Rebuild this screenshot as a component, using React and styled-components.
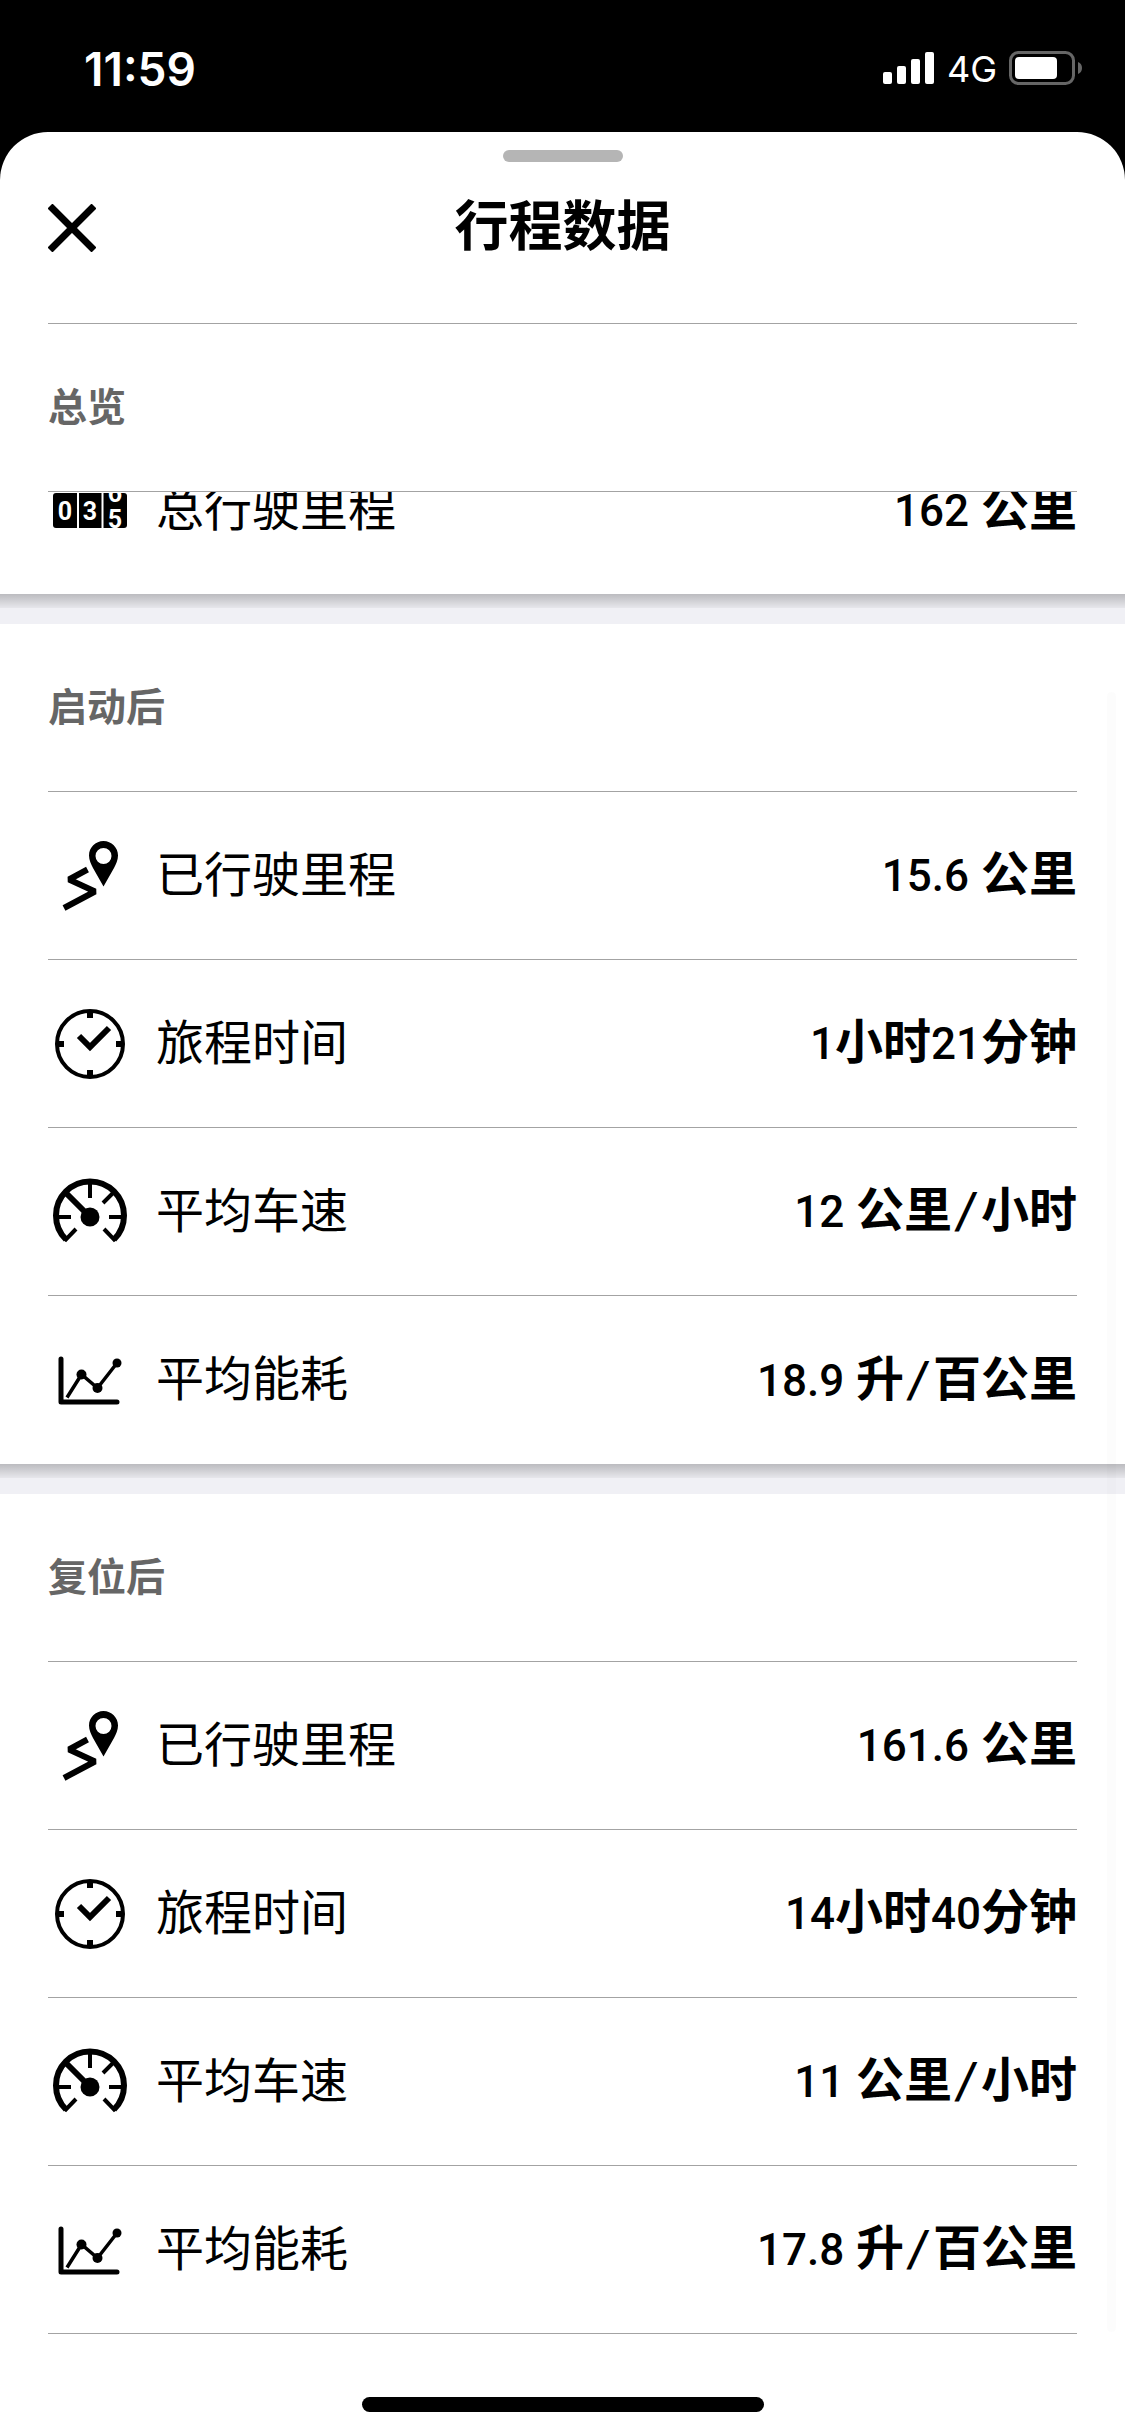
import styled, { createGlobalStyle, css } from "styled-components";

const COLORS = {
  ink: "#000000",
  muted: "#666666",
  line: "#a3a3a3",
  band: "#f0f0f5",
  grabber: "#b5b5b5",
};

const GlobalStyle = createGlobalStyle`
  * {
    box-sizing: border-box;
  }

  body {
    margin: 0;
    background: #000000;
    color: ${COLORS.ink};
    font-family: Roboto, "Noto Sans CJK SC", sans-serif;
  }
`;

const Screen = styled.div`
  display: flex;
  flex-direction: column;
  min-height: 100vh;
`;

const StatusBar = styled.header`
  display: flex;
  align-items: center;
  justify-content: space-between;
  height: 132px;
  padding: 6px 42px 0 84px;
  color: #ffffff;
  font-family: Inter, sans-serif;
`;

const Clock = styled.time`
  font-size: 46px;
  font-weight: 600;
`;

const StatusIcons = styled.div`
  display: flex;
  align-items: center;
  gap: 12px;
`;

const Network = styled.span`
  font-size: 36px;
  font-weight: 400;
`;

const Sheet = styled.main`
  position: relative;
  display: flex;
  flex: 1;
  flex-direction: column;
  background: #ffffff;
  border-radius: 48px 48px 0 0;
`;

const Grabber = styled.div`
  width: 120px;
  height: 12px;
  margin: 18px auto 0;
  border-radius: 6px;
  background: ${COLORS.grabber};
`;

const TitleBar = styled.div`
  display: grid;
  grid-template-columns: 48px 1fr 48px;
  align-items: center;
  height: 162px;
  margin: 0 48px;
  padding-bottom: 30px;
  border-bottom: 1px solid ${COLORS.line};
`;

const CloseButton = styled.button`
  display: flex;
  padding: 0;
  border: 0;
  background: none;
  cursor: pointer;
`;

const Title = styled.h1`
  margin: 0;
  font-size: 54px;
  font-weight: 700;
  line-height: 72px;
  text-align: center;
`;

const Section = styled.section`
  & + & {
    border-top: 30px solid ${COLORS.band};
  }
`;

const SectionTitle = styled.h2`
  display: flex;
  align-items: center;
  height: 168px;
  margin: 0 48px;
  padding-bottom: 8px;
  border-bottom: 1px solid ${COLORS.line};
  color: ${COLORS.muted};
  font-size: 39px;
  font-weight: 700;
`;

const Rows = styled.dl`
  display: flex;
  flex-direction: column;
  justify-content: flex-end;
  margin: 0;
  padding: 0 48px;
  ${({ $scrolled }) =>
    $scrolled &&
    css`
      height: 102px;
      overflow: hidden;
    `}
`;

const Row = styled.div`
  display: flex;
  flex-shrink: 0;
  align-items: center;
  height: 168px;
  font-size: 48px;
  line-height: 72px;

  &:not(:last-child),
  ${Section}:last-of-type &:last-child {
    border-bottom: 1px solid ${COLORS.line};
  }
`;

const IconSlot = styled.span`
  display: flex;
  width: 84px;
  margin-right: 24px;
`;

const Label = styled.dt`
  flex: 1;
`;

const Value = styled.dd`
  margin: 0;
  font-weight: 700;
`;

const Digits = styled.span`
  font-size: 44px;
  font-weight: 500;
`;

const Slash = styled.span`
  font-family: "DejaVu Sans Mono", monospace;
  font-weight: 400;
  line-height: 48px;
`;

const Shadow = styled.div`
  position: relative;
  height: 14px;
  margin-bottom: -14px;
  background: linear-gradient(rgba(0, 0, 0, 0.22), rgba(0, 0, 0, 0.04));
`;

const ScrollBar = styled.div`
  position: absolute;
  top: 560px;
  right: 9px;
  bottom: 104px;
  width: 9px;
  border-radius: 4px;
  background: rgba(0, 0, 0, 0.01);
`;

const HomeIndicator = styled.div`
  width: 402px;
  height: 15px;
  margin: auto auto 24px;
  border-radius: 8px;
  background: ${COLORS.ink};
`;

const SignalIcon = () => (
  <svg width="52" height="36" viewBox="0 0 52 36" fill="currentColor">
    <rect x="0" y="21" width="9" height="12" rx="2" />
    <rect x="14" y="15" width="9" height="18" rx="2" />
    <rect x="28" y="8" width="9" height="25" rx="2" />
    <rect x="42" y="1" width="9" height="32" rx="2" />
  </svg>
);

const BatteryIcon = () => (
  <svg width="74" height="36" viewBox="0 0 74 36" fill="none">
    <rect x="1.500" y="1.500" width="63" height="31" rx="8" stroke="#666" strokeWidth="3" />
    <rect x="6" y="6" width="42" height="22" rx="4" fill="#fff" />
    <path d="M69 11a6.500 6.500 0 0 1 0 12z" fill="#666" />
  </svg>
);

const CloseIcon = () => (
  <svg width="48" height="48" viewBox="0 0 48 48" fill="none">
    <path d="M2 2L46 46M46 2L2 46" stroke="#000" strokeWidth="7" />
  </svg>
);

const OdometerIcon = () => (
  <svg width="84" height="84" viewBox="0 0 84 84">
    <defs>
      <clipPath id="drum">
        <rect x="57" y="25" width="22" height="35" />
      </clipPath>
    </defs>
    <rect x="5" y="25" width="74" height="35" rx="3" />
    <path d="M30 25V60M54.500 25V60" stroke="#fff" strokeWidth="2" />
    <g
      fill="#fff"
      fontFamily="Roboto, sans-serif"
      fontWeight="700"
      fontSize="25"
      textAnchor="middle"
    >
      <text x="17" y="52">0</text>
      <text x="42" y="52">3</text>
      <g clipPath="url(#drum)">
        <text x="67" y="34">6</text>
        <text x="67" y="60">5</text>
      </g>
    </g>
  </svg>
);

const RouteIcon = () => (
  <svg width="84" height="84" viewBox="0 0 84 84">
    <path
      fillRule="evenodd"
      d="M55.500 7C47.500 7 41 13.500 41 21.500C41 26 43 30 45 34L55.500 52.500L66 34C68 30 70 26 70 21.500C70 13.500 63.500 7 55.500 7ZM55.500 14A8 8 0 1 1 55.500 30A8 8 0 1 1 55.500 14Z"
    />
    <path
      d="M39.500 35.500L21 45.500L47 57.500L16 74"
      fill="none"
      stroke="#000"
      strokeWidth="6"
      strokeLinejoin="bevel"
    />
  </svg>
);

const ClockIcon = () => (
  <svg width="84" height="84" viewBox="0 0 84 84" fill="none" stroke="#000">
    <circle cx="42" cy="42" r="33" strokeWidth="4" />
    <path d="M42 8V16M42 68V76M8 42H16M68 42H76" strokeWidth="6" />
    <path d="M31 34L42 45L61 26" strokeWidth="6" />
  </svg>
);

const SpeedIcon = () => (
  <svg width="84" height="84" viewBox="0 0 84 84" fill="none" stroke="#000">
    <path d="M28 59L18 69.500A34 34 0 1 1 66 69.500L56 59" strokeWidth="4" />
    <path d="M18 69.500A34 34 0 1 1 66 69.500" strokeWidth="6" />
    <path d="M42 14V28M11 47H23M61 47H73M65 23L55 33" strokeWidth="4" />
    <path d="M18 23L42 47" strokeWidth="6" />
    <circle cx="42" cy="47" r="9.500" fill="#000" stroke="none" />
  </svg>
);

const ChartIcon = () => (
  <svg width="84" height="84" viewBox="0 0 84 84" fill="none" stroke="#000">
    <path
      d="M13 21V64H69"
      strokeWidth="5"
      strokeLinecap="round"
      strokeLinejoin="round"
    />
    <path d="M19 59.500L33.500 36.500L49.500 50L69 25" strokeWidth="3.500" />
    <g fill="#000" stroke="none">
      <circle cx="33.500" cy="36.500" r="5" />
      <circle cx="49.500" cy="50" r="5" />
      <circle cx="69" cy="25" r="4.500" />
    </g>
  </svg>
);

const tripRows = ([distance, time, speed, usage]) => [
  { icon: RouteIcon, label: "已行驶里程", value: distance },
  { icon: ClockIcon, label: "旅程时间", value: time },
  { icon: SpeedIcon, label: "平均车速", value: speed },
  { icon: ChartIcon, label: "平均能耗", value: usage },
];

const SECTIONS = [
  {
    title: "总览",
    scrolled: true,
    rows: [{ icon: OdometerIcon, label: "总行驶里程", value: "162 公里" }],
  },
  {
    title: "启动后",
    rows: tripRows(["15.6 公里", "1小时21分钟", "12 公里/小时", "18.9 升/百公里"]),
  },
  {
    title: "复位后",
    rows: tripRows(["161.6 公里", "14小时40分钟", "11 公里/小时", "17.8 升/百公里"]),
  },
];

const Quantity = ({ text }) => (
  <Value>
    {text.split(/([\d.]+|\/)/).map((part, index) => {
      if (part === "/") return <Slash key={index}>/</Slash>;
      if (/\d/.test(part)) return <Digits key={index}>{part}</Digits>;
      return part;
    })}
  </Value>
);

const App = () => {
  return (
    <Screen lang="zh-CN">
      <GlobalStyle />
      <StatusBar>
        <Clock>11:59</Clock>
        <StatusIcons>
          <SignalIcon />
          <Network>4G</Network>
          <BatteryIcon />
        </StatusIcons>
      </StatusBar>

      <Sheet>
        <Grabber />
        <TitleBar>
          <CloseButton aria-label="关闭">
            <CloseIcon />
          </CloseButton>
          <Title>行程数据</Title>
        </TitleBar>

        {SECTIONS.map(({ title, scrolled, rows }, index) => (
          <Section key={title}>
            <SectionTitle>{title}</SectionTitle>
            <Rows $scrolled={scrolled}>
              {rows.map(({ icon: Icon, label, value }) => (
                <Row key={label}>
                  <IconSlot>
                    <Icon />
                  </IconSlot>
                  <Label>{label}</Label>
                  <Quantity text={value} />
                </Row>
              ))}
            </Rows>
            {index < SECTIONS.length - 1 && <Shadow />}
          </Section>
        ))}

        <ScrollBar />
        <HomeIndicator />
      </Sheet>
    </Screen>
  );
};

export default App;
